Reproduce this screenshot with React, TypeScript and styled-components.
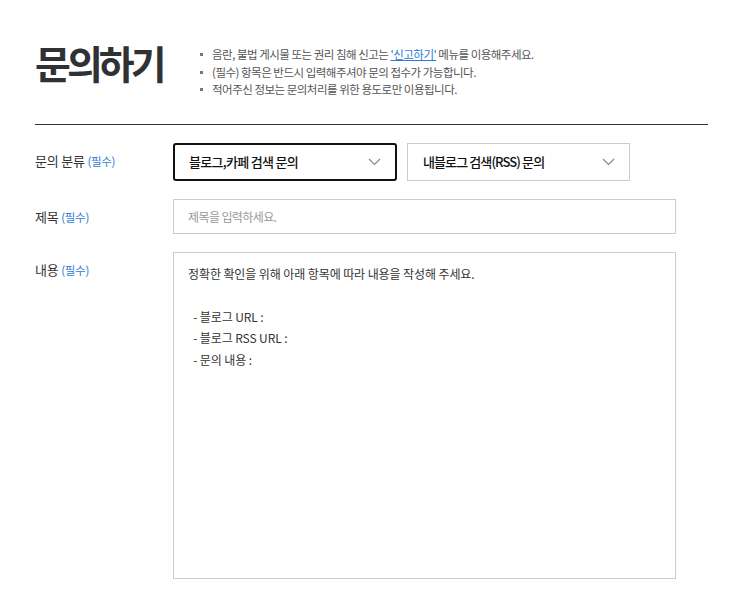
import React from "react";
import styled, { createGlobalStyle } from "styled-components";

const GlobalStyle = createGlobalStyle`
  body {
    margin: 0;
    background: #fff;
    font-family: "Noto Sans CJK KR", "Noto Sans", sans-serif;
    color: #333;
  }
`;

function Chevron() {
  return (
    <svg width="13" height="8" viewBox="0 0 13 8" fill="none">
      <path d="M1 1l5.5 5.5L12 1" stroke="#888" strokeWidth="1.2" />
    </svg>
  );
}

export default function App() {
  return (
    <Page>
      <GlobalStyle />
      <Header>
        <Title>문의하기</Title>
        <Notices>
          <Notice>
            음란, 불법 게시물 또는 권리 침해 신고는 <NoticeLink href="#">'신고하기'</NoticeLink> 메뉴를
            이용해주세요.
          </Notice>
          <Notice>(필수) 항목은 반드시 입력해주셔야 문의 접수가 가능합니다.</Notice>
          <Notice>적어주신 정보는 문의처리를 위한 용도로만 이용됩니다.</Notice>
        </Notices>
      </Header>

      <Form>
        <Row>
          <Label>
            문의 분류 <Required>(필수)</Required>
          </Label>
          <SelectGroup>
            <Select active>
              <span>블로그,카페 검색 문의</span>
              <Chevron />
            </Select>
            <Select>
              <span>내블로그 검색(RSS) 문의</span>
              <Chevron />
            </Select>
          </SelectGroup>
        </Row>
        <Row>
          <Label>
            제목 <Required>(필수)</Required>
          </Label>
          <TextInput placeholder="제목을 입력하세요." />
        </Row>
        <Row>
          <Label>
            내용 <Required>(필수)</Required>
          </Label>
          <TextArea
            defaultValue={
              "정확한 확인을 위해 아래 항목에 따라 내용을 작성해 주세요.\n\n  - 블로그 URL :\n  - 블로그 RSS URL :\n  - 문의 내용 :"
            }
          />
        </Row>
      </Form>
    </Page>
  );
}

const Page = styled.div`
  width: 673px;
  padding: 38px 0 0 35px;
`;

const Header = styled.div`
  display: flex;
  align-items: flex-start;
  padding-bottom: 25px;
  border-bottom: 1px solid #333;
`;

const Title = styled.h1`
  margin: 0;
  width: 160px;
  font-size: 39px;
  line-height: 48px;
  font-weight: 700;
  letter-spacing: -4px;
  color: #2f3135;
`;

const Notices = styled.ul`
  list-style: none;
  margin: 8px 0 0;
  padding: 0 0 0 5px;
`;

const Notice = styled.li`
  position: relative;
  padding-left: 12px;
  font-size: 11.5px;
  line-height: 17.5px;
  letter-spacing: -0.5px;
  color: #555;

  &::before {
    content: "";
    position: absolute;
    left: 0;
    top: 7px;
    width: 3px;
    height: 3px;
    background: #777;
  }
`;

const NoticeLink = styled.a`
  color: #2e7ad6;
  text-decoration: underline;
`;

const Form = styled.div`
  display: flex;
  flex-direction: column;
  gap: 18px;
  padding-top: 18px;
`;

const Row = styled.div`
  display: grid;
  grid-template-columns: 138px 503px;
  align-items: start;
`;

const Label = styled.div`
  padding-top: 8px;
  font-size: 13px;
  line-height: 20px;
  letter-spacing: -0.2px;
  color: #333;
`;

const Required = styled.span`
  font-size: 11.5px;
  color: #2e7ad6;
  letter-spacing: -0.3px;
`;

const SelectGroup = styled.div`
  display: flex;
  gap: 10px;
`;

const Select = styled.div<{ active?: boolean }>`
  box-sizing: border-box;
  width: ${(p) => (p.active ? "224px" : "223px")};
  height: 38px;
  display: flex;
  align-items: center;
  justify-content: space-between;
  padding: 0 14px 0 ${(p) => (p.active ? "14px" : "15px")};
  border: ${(p) => (p.active ? "2px solid #111" : "1px solid #ccc")};
  border-radius: ${(p) => (p.active ? "3px" : "0")};
  font-size: 13px;
  font-weight: 500;
  letter-spacing: ${(p) => (p.active ? "-0.7px" : "-0.9px")};
  color: #111;
`;

const TextInput = styled.input`
  box-sizing: border-box;
  width: 503px;
  height: 35px;
  padding: 0 14px;
  border: 1px solid #ccc;
  font-family: inherit;
  font-size: 12px;
  letter-spacing: -0.6px;
  outline: none;

  &::placeholder {
    color: #999;
  }
`;

const TextArea = styled.textarea`
  box-sizing: border-box;
  width: 503px;
  height: 327px;
  padding: 10px 14px;
  border: 1px solid #ccc;
  resize: none;
  font-family: inherit;
  font-size: 12px;
  line-height: 21.5px;
  letter-spacing: -0.1px;
  color: #333;
  outline: none;
`;
